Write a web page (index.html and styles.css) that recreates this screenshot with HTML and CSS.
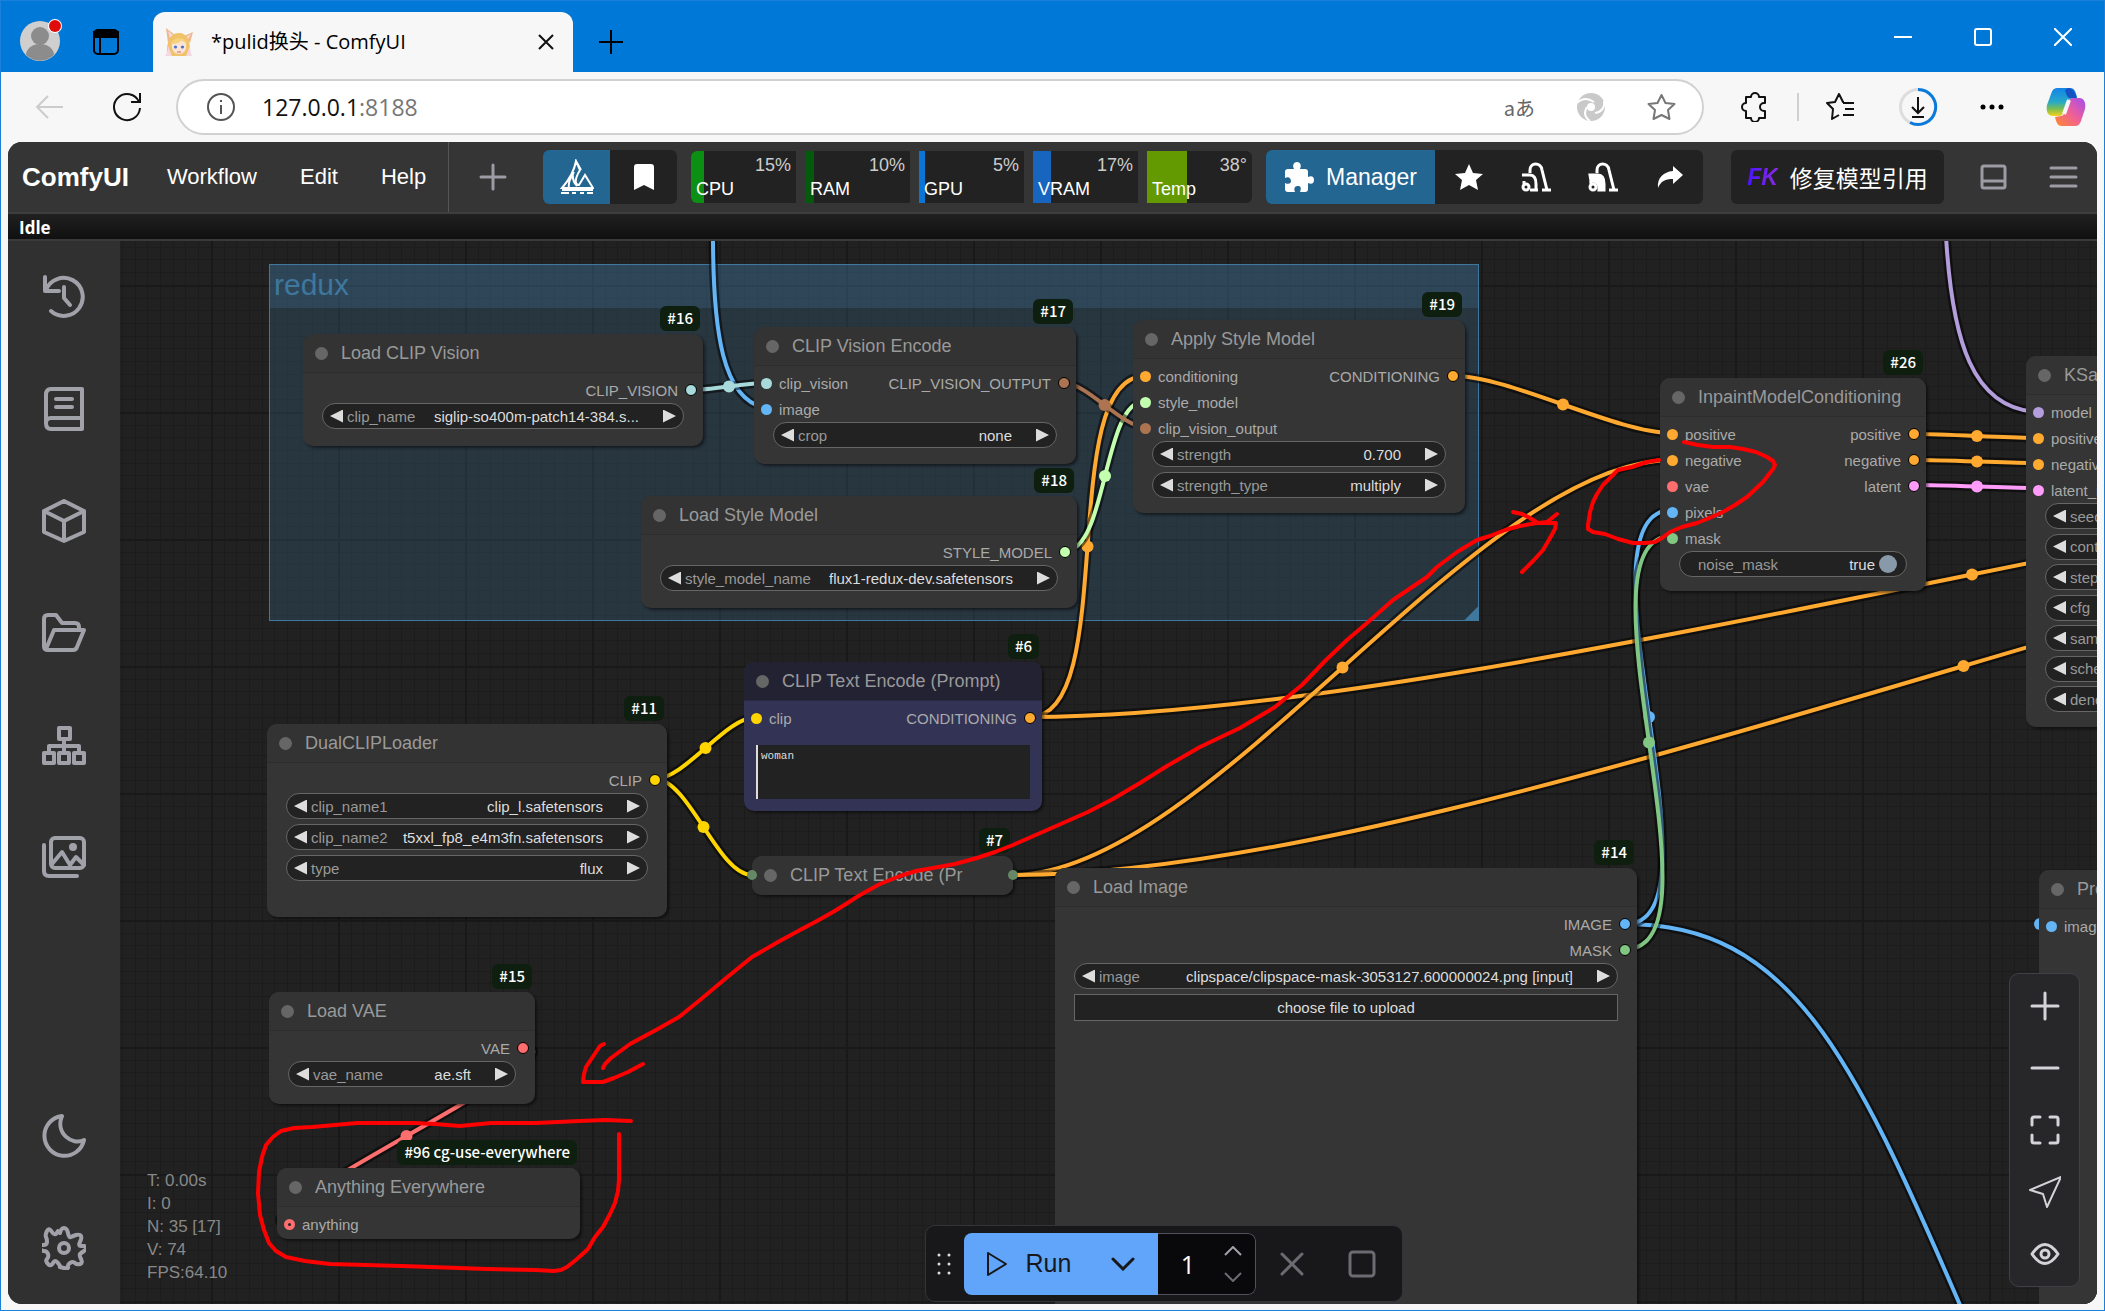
FILE: index.html
```html
<!DOCTYPE html>
<html lang="zh-CN">
<head>
    <meta charset="UTF-8">
    <meta name="viewport" content="width=device-width, initial-scale=1.0">
    <title>*pulid换头 - ComfyUI</title>
    <link rel="stylesheet" href="styles.css">
</head>
<body>
    <!-- Tab strip -->
    <header class="tabstrip">
        <button class="avatar" aria-label="Profile">
            <svg width="46" height="46" viewBox="0 0 46 46"><circle cx="22" cy="25" r="20" fill="#cfcfcf"/><circle cx="22" cy="20" r="9" fill="#8c8c8c"/><path d="M8 39a14 11 0 0 1 28 0 20 20 0 0 1-28 0z" fill="#8c8c8c"/><circle cx="37" cy="10" r="7" fill="#fff"/><circle cx="37" cy="10" r="6" fill="#e00b0b"/></svg>
        </button>
        <button class="workspaces" aria-label="Workspaces">
            <svg width="26" height="26" viewBox="0 0 26 26" fill="none" stroke="#000" stroke-width="2"><rect x="1" y="1" width="24" height="24" rx="4"/><path d="M1 3h24v5H1z" fill="#000"/><path d="M7 8v17"/></svg>
        </button>
        <div class="tab">
            <svg width="28" height="28" viewBox="0 0 28 28"><path d="M3 15 1 0l9 7zM25 15l3-11-9 4z" fill="#f0b88c"/><path d="M5 10 3 3l6 5zM23 11l3-5-5 3z" fill="#f7dce0"/><path d="M2 28C1 12 6 5 14 5s12 8 11 23z" fill="#f0c36a"/><path d="M7 15c2-4 12-4 14 0 1 7-2 11-7 11s-8-4-7-11z" fill="#fbe3d6"/><path d="M6 16c2-7 14-8 16 0-3-1-4-3-5-4-2 3-7 4-11 4z" fill="#f6d27c"/><circle cx="10.500" cy="19" r="1.600" fill="#4a74c9"/><circle cx="17.500" cy="19" r="1.600" fill="#4a74c9"/><path d="M12 24h4" stroke="#c96a6a"/><path d="M3 18c0 4-1 7-3 10h7zM25 18c0 4 1 7 2 10h-6z" fill="#f3d7e2"/></svg>
            <span class="tab-title">*pulid换头 - ComfyUI</span>
            <button aria-label="Close tab"><svg width="16" height="16" viewBox="0 0 16 16" stroke="#111" stroke-width="2"><path d="m1 1 14 14M15 1 1 15"/></svg></button>
        </div>
        <button class="new-tab" aria-label="New tab"><svg width="24" height="24" viewBox="0 0 24 24" stroke="#000" stroke-width="2"><path d="M12 0v24M0 12h24"/></svg></button>
        <div class="window-controls">
            <button aria-label="Minimize"><svg width="18" height="18" viewBox="0 0 18 18" stroke="#fff" stroke-width="2"><path d="M0 9h18"/></svg></button>
            <button aria-label="Maximize"><svg width="18" height="18" viewBox="0 0 18 18" fill="none" stroke="#fff" stroke-width="2"><rect x="1" y="1" width="16" height="16" rx="2"/></svg></button>
            <button aria-label="Close"><svg width="18" height="18" viewBox="0 0 18 18" stroke="#fff" stroke-width="2"><path d="m0 0 18 18M18 0 0 18"/></svg></button>
        </div>
    </header>

    <!-- Address bar -->
    <nav class="toolbar">
        <button class="back" aria-label="Back"><svg width="28" height="24" viewBox="0 0 28 24" fill="none" stroke="#ccc" stroke-width="2"><path d="M28 12H2M13 1 2 12l11 11"/></svg></button>
        <button class="reload" aria-label="Reload"><svg width="30" height="30" viewBox="0 0 30 30" fill="none" stroke="#111" stroke-width="2"><path d="M27 10A13 13 0 1 0 28 16M28 1v9h-9"/></svg></button>
        <div class="address">
            <svg width="28" height="28" viewBox="0 0 28 28" fill="none" stroke="#555" stroke-width="2"><circle cx="14" cy="14" r="13"/><path d="M14 12v9M14 7v2"/></svg>
            <a class="url" href="#">127.0.0.1<span>:8188</span></a>
            <button aria-label="Translate" class="translate">aあ</button>
            <button aria-label="Copilot search"><svg width="28" height="28" viewBox="0 0 28 28"><circle cx="14" cy="14" r="14" fill="#c9c9c9"/><circle cx="14" cy="14" r="4" fill="#fff"/><path d="M0 10c5-5 11-5 17-1M27 8c1 6-2 11-9 12M13 28c-6-4-6-9-3-14" fill="none" stroke="#fff" stroke-width="2"/></svg></button>
            <button aria-label="Add to favorites"><svg width="29" height="28" viewBox="0 0 29 28" fill="none" stroke="#777" stroke-width="2" stroke-linejoin="round"><path d="m14.500 2 4 8 9 1-6.500 6 1.500 9-8-4-8 4L8 17l-6.500-6 9-1z"/></svg></button>
        </div>
        <div class="toolbar-icons">
            <button aria-label="Extensions"><svg width="30" height="30" viewBox="0 0 30 30" fill="none" stroke="#111" stroke-width="2" stroke-linejoin="round"><path d="M6 5h5a4 4 0 0 1 8 0h6v6h-1a4 4 0 0 0 0 8h1v7h-6a4 4 0 0 1-8 0H6v-7a4 4 0 0 1 0-8z"/></svg></button>
            <i class="divider"></i>
            <button aria-label="Favorites"><svg width="30" height="30" viewBox="0 0 30 30" fill="none" stroke="#111" stroke-width="2" stroke-linejoin="round"><path d="M18 10h-1l-4-8-4 8-8 1 6 6-1 10 7-4M17 11h11M19 17h9M17 23h11"/></svg></button>
            <button aria-label="Downloads"><svg width="40" height="40" viewBox="0 0 40 40" fill="none"><circle cx="20" cy="20" r="17.500" stroke="#ddd" stroke-width="3"/><path d="M20 2.500a17.500 17.500 0 1 1-8 33" stroke="#0b7bdb" stroke-width="3"/><path d="M20 10v16m-6-6 6 6 6-6M14 30h12" stroke="#111" stroke-width="2"/></svg></button>
            <button aria-label="Settings and more"><svg width="24" height="6" viewBox="0 0 24 6"><circle cx="3" cy="3" r="2.500"/><circle cx="12" cy="3" r="2.500"/><circle cx="21" cy="3" r="2.500"/></svg></button>
            <button aria-label="Copilot"><svg width="40" height="38" viewBox="0 0 40 38"><defs><linearGradient id="cpBlue" x1="0" y1="0" x2="0" y2="1"><stop offset="0" stop-color="#1483e6"/><stop offset=".5" stop-color="#27a9c9"/><stop offset=".75" stop-color="#7cc04f"/><stop offset="1" stop-color="#f8cf1c"/></linearGradient><linearGradient id="cpPink" x1="1" y1="0" x2="0" y2="1"><stop offset="0" stop-color="#a24cf0"/><stop offset=".5" stop-color="#ef5f98"/><stop offset="1" stop-color="#ff8a2b"/></linearGradient></defs><path d="M11 0h13c5 0 6 5 7 9l-6 2c-2 0-3 1-4 4l-4 10c-1 3-3 3-5 3H7c-6 0-7-6-6-11L5 6c1-4 3-6 6-6z" fill="url(#cpBlue)"/><path d="M22 0c5 0 7 4 9 10h-7c-3 0-4-5-5-8z" fill="#1552c4"/><path d="M29 38H16c-5 0-6-5-7-9l6-1c2 0 3-2 4-4l4-11c1-3 3-3 5-3h5c6 0 7 6 6 11l-4 12c-1 3-3 5-6 5z" fill="url(#cpPink)"/><path d="m23 12-5 14" stroke="#f7f7f7" stroke-width="4"/></svg></button>
        </div>
    </nav>

    <main class="app">
        <!-- Menu bar -->
        <div class="menubar">
            <h1>ComfyUI</h1>
            <button class="menu-item">Workflow</button>
            <button class="menu-item">Edit</button>
            <button class="menu-item">Help</button>
            <div class="workflow-tabs">
                <button aria-label="New workflow"><svg width="28" height="28" viewBox="0 0 28 28" stroke="#9c9ca4" stroke-width="3" stroke-linecap="round"><path d="M14 2v24M2 14h24"/></svg></button>
            </div>
            <div class="group">
                <button class="tool blue" aria-label="Sail"><svg width="34" height="36" viewBox="0 0 34 36" fill="none" stroke="#fff" stroke-width="2"><path d="M16 2C14 14 8 22 2 29h31L25 16l-6 10c-4 0-5-5 1-15z M16 2l5 9M14 13c-4 7-6 11-5 16M13 14c-1 7 1 10 4 13M2 31h31M1 34h8m3 0h4m4 0h4m3 0h6"/></svg></button>
                <button class="tool" aria-label="Bookmark"><svg width="20" height="26" viewBox="0 0 20 26"><path d="M0 3q0-3 3-3h14q3 0 3 3v23l-10-5-10 5z" fill="#fff"/></svg></button>
            </div>
            <div class="monitors">
                <div class="monitor cpu"><i style="width:13px"></i><b>15%</b><span>CPU</span></div>
                <div class="monitor ram"><i style="width:9px"></i><b>10%</b><span>RAM</span></div>
                <div class="monitor gpu"><i style="width:6px"></i><b>5%</b><span>GPU</span></div>
                <div class="monitor vram"><i style="width:18px"></i><b>17%</b><span>VRAM</span></div>
                <div class="monitor temp"><i style="width:40px"></i><b>38°</b><span>Temp</span></div>
            </div>
            <div class="group">
                <button class="manager"><svg width="30" height="30" viewBox="0 0 30 30" fill="#fff"><path d="M1 10q0-3 3-3h6c-2-4 0-7 3-7s5 3 3 7h5q3 0 3 3v5c4-2 6 0 6 3s-2 5-6 3v6q0 3-3 3h-5c2-5 0-6-2-6s-5 1-3 6H4q-3 0-3-3v-6c4 2 6 0 6-2s-2-5-6-3z"/></svg>Manager</button>
                <button class="tool" aria-label="Favorites"><svg width="28" height="26" viewBox="0 0 28 26"><path d="m14 0 4 9 10 1-7 6 2 10-9-5-9 5 2-10-7-6 10-1z" fill="#fff"/></svg></button>
                <button class="tool" aria-label="Unload models"><svg width="30" height="30" viewBox="0 0 30 30" fill="none" stroke="#fff" stroke-width="3"><path d="M9 11V8c0-8 11-8 12 0l5 20M1 13h8c5 0 6 4 6 9v6M3 19v3"/><circle cx="5" cy="25" r="3"/><path d="M9 28h8M21 28h9"/></svg></button>
                <button class="tool" aria-label="Free cache"><svg width="30" height="30" viewBox="0 0 30 30" fill="none" stroke="#fff" stroke-width="3"><path d="M9 11V8c0-8 11-8 12 0l5 20M3 19v3"/><path d="M2 13h8c5 0 6 4 6 9v6h-5c1-7-3-9-8-9z" fill="#fff"/><circle cx="5" cy="25" r="3"/><path d="M21 28h9"/></svg></button>
                <button class="tool" aria-label="Share"><svg width="26" height="22" viewBox="0 0 26 22"><path d="M16 0l10 9-10 9v-5C8 13 4 15 1 22 0 12 6 6 16 5z" fill="#fff"/></svg></button>
            </div>
            <button class="fix-models"><span>FK</span>修复模型引用</button>
            <div class="menu-right">
                <button aria-label="Toggle bottom panel"><svg width="27" height="26" viewBox="0 0 27 26" fill="none" stroke="#9c9ca4" stroke-width="3"><rect x="2" y="2" width="23" height="22" rx="2"/><path d="M2 17h23"/></svg></button>
                <button aria-label="Menu"><svg width="29" height="22" viewBox="0 0 29 22" stroke="#9c9ca4" stroke-width="3" stroke-linecap="round"><path d="M2 2h25M2 11h25M2 20h25"/></svg></button>
            </div>
        </div>
        <div class="status">Idle</div>

        <div class="workspace">
            <aside class="sidebar">
                <button aria-label="Queue"><svg viewBox="0 0 44 44"><path d="M3 2v14h14M4 15a19 19 0 1 1 5 21M22 12v11l6 7"/></svg></button>
                <button aria-label="Node library"><svg viewBox="0 0 44 44"><path d="M9 2h31v40H9q-5 0-5-6V8q0-6 5-6zM40 31H9q-5 0-5 5M14 12h16M14 20h16"/></svg></button>
                <button aria-label="Model library"><svg viewBox="0 0 44 44"><path d="m22 2 20 10v21L22 42 2 33V12zM2 12l20 10 20-10M22 22v20"/></svg></button>
                <button aria-label="Workflows"><svg viewBox="0 0 44 44"><path d="M2 36V8q0-4 4-4h8l6 8h13q4 0 4 4v3M4 38l8-19h30l-7 17q-1 3-4 3H6q-4 0-4-4"/></svg></button>
                <button aria-label="Nodes map"><svg viewBox="0 0 44 44"><path d="M17 5h11v11H17zM2 30h10v10H2zM17 30h10v10H17zM32 30h10v10H32zM22 16v14M7 30v-7h30v7"/></svg></button>
                <button aria-label="Gallery"><svg viewBox="0 0 44 44"><rect x="9" y="3" width="33" height="30" rx="4"/><path d="M2 10v26q0 5 5 5h28M10 29l10-12 8 13 6-8 8 8"/><circle cx="31" cy="12" r="2"/></svg></button>
                <button class="push" aria-label="Theme"><svg viewBox="0 0 44 44"><path d="M20 2A20 20 0 1 0 42 26C30 32 13 19 20 2z"/></svg></button>
                <button aria-label="Settings"><svg viewBox="0 0 44 44"><path d="M18 7q1-5 4-5t4 5 3 4 5-2q4-1 5 1t-1 6 1 4 3 0q3 1 3 2t-3 3-4 3 1 5-1 5-5-1-5 0-2 4-4 1-4-1-2-4-5 0-5 1-1-5 1-5-4-3-4-3 3-3 4-3-1-5 1-6 5 1 6-1z"/><circle cx="22" cy="22" r="5"/></svg></button>
            </aside>

            <section class="canvas">
                <div class="graph">
                    <svg class="layer" width="2105" height="1311">
                        <defs>
                            <pattern id="grid" x="211" y="285" width="127" height="127" patternUnits="userSpaceOnUse">
                                <path d="M13.500 0v127M25.500 0v127M38.500 0v127M51.500 0v127M63.500 0v127M76.500 0v127M89.500 0v127M101.500 0v127M114.500 0v127M0 13.500h127M0 25.500h127M0 38.500h127M0 51.500h127M0 63.500h127M0 76.500h127M0 89.500h127M0 101.500h127M0 114.500h127" stroke="#1c1c1c"/>
                                <path d="M0 1h127M1 0v127" stroke="#191919" stroke-width="2"/>
                            </pattern>
                        </defs>
                        <rect width="2105" height="1311" fill="url(#grid)"/>
                    </svg>

                    <section class="node-group"><h2>redux</h2></section>

                    <svg class="layer" id="links" width="2105" height="1311"></svg>

                    <article class="node n16">
                        <span class="badge">#16</span>
                        <h3>Load CLIP Vision</h3>
                        <div class="row"><span class="out clipvision">CLIP_VISION</span></div>
                        <div class="widgets">
                            <div class="widget"><button class="prev" aria-label="Previous"></button><label for="w1">clip_name</label><select id="w1"><option>siglip-so400m-patch14-384.s...</option></select><button class="next" aria-label="Next"></button></div>
                        </div>
                    </article>

                    <article class="node n17">
                        <span class="badge">#17</span>
                        <h3>CLIP Vision Encode</h3>
                        <div class="row"><span class="in clipvision">clip_vision</span><span class="out visionout">CLIP_VISION_OUTPUT</span></div>
                        <div class="row"><span class="in image">image</span></div>
                        <div class="widgets">
                            <div class="widget"><button class="prev" aria-label="Previous"></button><label for="w2">crop</label><select id="w2"><option>none</option></select><button class="next" aria-label="Next"></button></div>
                        </div>
                    </article>

                    <article class="node n18">
                        <span class="badge">#18</span>
                        <h3>Load Style Model</h3>
                        <div class="row"><span class="out style">STYLE_MODEL</span></div>
                        <div class="widgets">
                            <div class="widget"><button class="prev" aria-label="Previous"></button><label for="w3">style_model_name</label><select id="w3"><option>flux1-redux-dev.safetensors</option></select><button class="next" aria-label="Next"></button></div>
                        </div>
                    </article>

                    <article class="node n19">
                        <span class="badge">#19</span>
                        <h3>Apply Style Model</h3>
                        <div class="row"><span class="in cond">conditioning</span><span class="out cond">CONDITIONING</span></div>
                        <div class="row"><span class="in style">style_model</span></div>
                        <div class="row"><span class="in visionout">clip_vision_output</span></div>
                        <div class="widgets">
                            <div class="widget"><button class="prev" aria-label="Decrease"></button><label for="w4">strength</label><input id="w4" type="text" value="0.700"><button class="next" aria-label="Increase"></button></div>
                            <div class="widget"><button class="prev" aria-label="Previous"></button><label for="w5">strength_type</label><select id="w5"><option>multiply</option></select><button class="next" aria-label="Next"></button></div>
                        </div>
                    </article>

                    <article class="node n26">
                        <span class="badge">#26</span>
                        <h3>InpaintModelConditioning</h3>
                        <div class="row"><span class="in cond">positive</span><span class="out cond">positive</span></div>
                        <div class="row"><span class="in cond">negative</span><span class="out cond">negative</span></div>
                        <div class="row"><span class="in vae">vae</span><span class="out latent">latent</span></div>
                        <div class="row"><span class="in image">pixels</span></div>
                        <div class="row"><span class="in mask">mask</span></div>
                        <div class="widgets">
                            <div class="widget toggle"><label for="w6">noise_mask</label><output for="w6">true</output><input id="w6" type="checkbox" checked></div>
                        </div>
                    </article>

                    <article class="node ksampler">
                        <h3>KSampler</h3>
                        <div class="row"><span class="in model">model</span></div>
                        <div class="row"><span class="in cond">positive</span></div>
                        <div class="row"><span class="in cond">negative</span></div>
                        <div class="row"><span class="in latent">latent_image</span></div>
                        <div class="widgets">
                            <div class="widget"><button class="prev" aria-label="Decrease"></button><label for="k1">seed</label><input id="k1" type="text"></div>
                            <div class="widget"><button class="prev" aria-label="Previous"></button><label for="k2">control_after_generate</label><select id="k2"></select></div>
                            <div class="widget"><button class="prev" aria-label="Decrease"></button><label for="k3">steps</label><input id="k3" type="text"></div>
                            <div class="widget"><button class="prev" aria-label="Decrease"></button><label for="k4">cfg</label><input id="k4" type="text"></div>
                            <div class="widget"><button class="prev" aria-label="Previous"></button><label for="k5">sampler_name</label><select id="k5"></select></div>
                            <div class="widget"><button class="prev" aria-label="Previous"></button><label for="k6">scheduler</label><select id="k6"></select></div>
                            <div class="widget"><button class="prev" aria-label="Decrease"></button><label for="k7">denoise</label><input id="k7" type="text"></div>
                        </div>
                    </article>

                    <article class="node prompt n6">
                        <span class="badge">#6</span>
                        <h3>CLIP Text Encode (Prompt)</h3>
                        <div class="row"><span class="in clip">clip</span><span class="out cond">CONDITIONING</span></div>
                        <textarea aria-label="Prompt">woman</textarea>
                    </article>

                    <article class="node n11">
                        <span class="badge">#11</span>
                        <h3>DualCLIPLoader</h3>
                        <div class="row"><span class="out clip">CLIP</span></div>
                        <div class="widgets">
                            <div class="widget"><button class="prev" aria-label="Previous"></button><label for="w7">clip_name1</label><select id="w7"><option>clip_l.safetensors</option></select><button class="next" aria-label="Next"></button></div>
                            <div class="widget"><button class="prev" aria-label="Previous"></button><label for="w8">clip_name2</label><select id="w8"><option>t5xxl_fp8_e4m3fn.safetensors</option></select><button class="next" aria-label="Next"></button></div>
                            <div class="widget"><button class="prev" aria-label="Previous"></button><label for="w9">type</label><select id="w9"><option>flux</option></select><button class="next" aria-label="Next"></button></div>
                        </div>
                    </article>

                    <article class="node collapsed n7">
                        <span class="badge">#7</span>
                        <h3>CLIP Text Encode (Pr</h3>
                    </article>

                    <article class="node n15">
                        <span class="badge">#15</span>
                        <h3>Load VAE</h3>
                        <div class="row"><span class="out vae">VAE</span></div>
                        <div class="widgets">
                            <div class="widget"><button class="prev" aria-label="Previous"></button><label for="w10">vae_name</label><select id="w10"><option>ae.sft</option></select><button class="next" aria-label="Next"></button></div>
                        </div>
                    </article>

                    <article class="node n96">
                        <span class="badge">#96 cg-use-everywhere</span>
                        <h3>Anything Everywhere</h3>
                        <div class="row"><span class="in vae ring">anything</span></div>
                    </article>

                    <article class="node n14">
                        <span class="badge">#14</span>
                        <h3>Load Image</h3>
                        <div class="row"><span class="out image">IMAGE</span></div>
                        <div class="row"><span class="out mask">MASK</span></div>
                        <div class="widgets">
                            <div class="widget"><button class="prev" aria-label="Previous"></button><label for="w11">image</label><select id="w11"><option>clipspace/clipspace-mask-3053127.600000024.png [input]</option></select><button class="next" aria-label="Next"></button></div>
                            <button class="upload">choose file to upload</button>
                        </div>
                    </article>

                    <article class="node preview">
                        <h3>Preview Image</h3>
                        <div class="row"><span class="in image">images</span></div>
                    </article>

                    <!-- Hand-drawn notes -->
                    <svg class="layer notes" width="2105" height="1311">
                        <polyline points="603,1068 605,1064 611,1058 630,1044 656,1030 679,1017 700,1000 725,979 752,957 778,942 800,930 817,921 833,912 846,904 860,895 880,884 900,876 916,871 933,868 955,864 977,858 995,852 1013,845 1038,834 1063,823 1088,812 1113,799 1140,783 1167,766 1200,747 1240,728 1275,707 1302,685 1325,661 1347,640 1367,623 1393,600 1427,577 1437,567 1457,552 1477,540 1490,536 1505,530 1520,526 1537,523 1556,523 1555,529 1550,538 1543,550 1534,560 1522,572"/>
                        <polyline points="1513,512 1522,514 1530,518 1538,523 1547,522 1557,514"/>
                        <polyline points="604,1044 600,1046 592,1058 586,1067 584,1074 583,1082 603,1082 614,1078 628,1072 643,1064"/>
                        <polyline points="631,1121 605,1120 580,1121 536,1123 491,1123 460,1126 435,1124 415,1123 357,1123 335,1125 312,1127 294,1128 281,1131 273,1137 266,1145 262,1157 259,1172 258,1193 260,1215 264,1230 269,1243 276,1251 286,1257 305,1261 330,1264 402,1266 487,1269 535,1270 554,1271 561,1270 567,1267 577,1259 588,1249 595,1237 603,1227 610,1214 615,1203 618,1191 619,1180 619,1134"/>
                        <polyline points="1684,442 1698,445 1713,447 1730,447 1743,449 1756,452 1767,457 1773,461 1775,465 1773,469 1763,482 1747,497 1735,505 1723,512 1707,519 1697,523 1682,527 1670,532 1662,538 1655,542 1645,543 1633,543 1618,539 1605,534 1593,532 1588,529 1588,525 1590,512 1593,502 1597,494 1603,485 1618,470 1632,467 1647,462 1659,460"/>
                    </svg>
                </div>

                <div class="stats">
                    <div>T: 0.00s</div>
                    <div>I: 0</div>
                    <div>N: 35 [17]</div>
                    <div>V: 74</div>
                    <div>FPS:64.10</div>
                </div>

                <div class="runbar">
                    <svg width="14" height="24" viewBox="0 0 14 24" fill="#ddd"><circle cx="2" cy="3" r="1.500"/><circle cx="12" cy="3" r="1.500"/><circle cx="2" cy="12" r="1.500"/><circle cx="12" cy="12" r="1.500"/><circle cx="2" cy="21" r="1.500"/><circle cx="12" cy="21" r="1.500"/></svg>
                    <div class="run-group">
                        <button class="run"><svg width="20" height="24" viewBox="0 0 20 24" fill="none" stroke="#18181b" stroke-width="2" stroke-linejoin="round"><path d="M1 1v22l18-11z"/></svg>Run</button>
                        <button class="run-more" aria-label="Run options"><svg width="24" height="14" viewBox="0 0 24 14" fill="none" stroke="#18181b" stroke-width="3" stroke-linecap="round"><path d="m2 2 10 10L22 2"/></svg></button>
                        <div class="count">
                            <input type="text" value="1" aria-label="Batch count">
                            <div class="steps">
                                <button aria-label="More"><svg width="18" height="10" viewBox="0 0 18 10" fill="none" stroke="#a1a1aa" stroke-width="2"><path d="m1 9 8-8 8 8"/></svg></button>
                                <button aria-label="Less"><svg width="18" height="10" viewBox="0 0 18 10" fill="none" stroke="#6b6b72" stroke-width="2"><path d="m1 1 8 8 8-8"/></svg></button>
                            </div>
                        </div>
                    </div>
                    <button class="run-icon" aria-label="Cancel"><svg width="24" height="24" viewBox="0 0 24 24" stroke="#6b6b72" stroke-width="3" stroke-linecap="round"><path d="m2 2 20 20M22 2 2 22"/></svg></button>
                    <button class="run-icon" aria-label="Clear queue"><svg width="28" height="28" viewBox="0 0 28 28" fill="none" stroke="#6b6b72" stroke-width="3"><rect x="2" y="2" width="24" height="24" rx="3"/></svg></button>
                </div>

                <div class="zoombar">
                    <button aria-label="Zoom in"><svg viewBox="0 0 32 32"><path d="M16 3v26M3 16h26"/></svg></button>
                    <button aria-label="Zoom out"><svg viewBox="0 0 32 32"><path d="M3 16h26"/></svg></button>
                    <button aria-label="Fit view"><svg viewBox="0 0 32 32"><path d="M3 11V5q0-2 2-2h6M21 3h6q2 0 2 2v6M29 21v6q0 2-2 2h-6M11 29H5q-2 0-2-2v-6"/></svg></button>
                    <button aria-label="Select mode"><svg viewBox="0 0 32 32"><path class="thin" d="M32 1 1 14l13 4 4 13z"/></svg></button>
                    <button aria-label="Toggle links"><svg viewBox="0 0 32 32"><path d="M3 16q13-19 26 0-13 19-26 0z"/><circle cx="16" cy="16" r="4"/></svg></button>
                </div>
            </section>
        </div>
    </main>

    <script src="links.js"></script>
</body>
</html>
```
FILE: links.js
```js
const colors = {
    clipvision: "#a8dadc",
    image: "#64b5f6",
    visionout: "#ad7452",
    style: "#c2ffae",
    cond: "#ffa931",
    latent: "#ff9cf9",
    model: "#b39ddb",
    mask: "#81c784",
    clip: "#ffd500",
    vae: "#ff6e6e"
};

// type, x1, y1, x2, y2
const links = [
    ["clipvision", 691, 390, 767, 383],
    ["cond", 1030, 717, 1145, 376],
    ["style", 1065, 551, 1145, 401],
    ["visionout", 1064, 383, 1145, 427],
    ["cond", 1454, 376, 1672, 433],
    ["cond", 1915, 434, 2039, 438],
    ["cond", 1915, 460, 2039, 463],
    ["latent", 1915, 485, 2039, 488],
    ["cond", 1030, 717, 2914, 432],
    ["cond", 1013, 875, 1672, 460],
    ["cond", 1013, 875, 2914, 457],
    ["image", 1626, 924, 1672, 510],
    ["mask", 1626, 949, 1672, 536],
    ["clip", 655, 779, 756, 717],
    ["clip", 655, 779, 752, 875],
    ["vae", 524, 1048, 289, 1224]
];

const svg = document.getElementById("links");

function add(tag, attrs) {
    const el = document.createElementNS("http://www.w3.org/2000/svg", tag);
    for (const key in attrs) el.setAttribute(key, attrs[key]);
    svg.appendChild(el);
}

function drawPath(d, color) {
    add("path", { d, stroke: "rgba(0,0,0,0.5)", "stroke-width": 9, fill: "none" });
    add("path", { d, stroke: color, "stroke-width": 4, fill: "none" });
}

// links that leave the visible area
drawPath("M713 236C713 330 722 402 767 408", colors.image);
drawPath("M1946 236C1952 340 1972 410 2039 412", colors.model);
drawPath("M1626 924C1790 924 1852 1055 1960 1305", colors.image);
add("circle", { cx: 2040, cy: 924, r: 6, fill: colors.image });

links.forEach(([type, x1, y1, x2, y2]) => {
    const off = Math.hypot(x2 - x1, y2 - y1) * 0.25;
    drawPath(`M${x1} ${y1}C${x1 + off} ${y1} ${x2 - off} ${y2} ${x2} ${y2}`, colors[type]);
    add("circle", { cx: (x1 + x2) / 2, cy: (y1 + y2) / 2, r: 6, fill: colors[type] });
});
```
FILE: styles.css
```css
*, *::before, *::after {
    box-sizing: border-box;
}

body {
    margin: 0;
    height: 100vh;
    display: flex;
    flex-direction: column;
    border: 1px solid #1a80d9;
    background: #f7f7f7;
    font-family: "Liberation Sans", "Noto Sans CJK SC", sans-serif;
    overflow: hidden;
}

h1, h2, h3 {
    margin: 0;
    font-weight: normal;
}

button {
    display: flex;
    align-items: center;
    justify-content: center;
    padding: 0;
    border: 0;
    background: none;
    color: inherit;
    font: inherit;
}

svg {
    display: block;
    flex: none;
}

/* Browser window */
.tabstrip {
    display: flex;
    align-items: center;
    flex: none;
    height: 71px;
    padding: 11px 0 0 17px;
    background: #0078d7;
}

.avatar {
    margin-bottom: 7px;
}

.workspaces {
    margin: 0 34px 0 29px;
}

.tab {
    display: flex;
    align-items: center;
    gap: 18px;
    align-self: stretch;
    width: 420px;
    padding: 0 19px 0 12px;
    border-radius: 12px 12px 0 0;
    background: #f7f7f7;
}

.tab-title {
    flex: 1;
    padding-bottom: 3px;
    font: 20px "Open Sans", "Noto Sans CJK SC", sans-serif;
}

.new-tab {
    margin-left: 26px;
}

.window-controls {
    display: flex;
    gap: 62px;
    margin-left: auto;
    padding: 0 32px 10px 0;
}

.toolbar {
    display: flex;
    align-items: center;
    flex: none;
    height: 70px;
    padding: 0 18px 0 34px;
}

.reload {
    margin: 0 34px 0 49px;
}

.address {
    display: flex;
    align-items: center;
    flex: 1;
    height: 56px;
    padding: 0 26px 0 29px;
    border: 2px solid #d1d1d1;
    border-radius: 28px;
    background: #fff;
    gap: 42px;
}

.url {
    flex: 1;
    margin-left: -15px;
    color: #111;
    text-decoration: none;
    font: 23px "Open Sans", sans-serif;
}

.url span {
    color: #767676;
}

.translate {
    color: #666;
    font: 20px "Noto Sans CJK JP", sans-serif;
}

.toolbar-icons {
    display: flex;
    align-items: center;
    gap: 42px;
    margin-left: 36px;
}

.divider {
    width: 2px;
    height: 28px;
    margin: 0 -15px;
    background: #d0d0d0;
}

/* App shell */
.app {
    display: flex;
    flex-direction: column;
    flex: 1;
    min-height: 0;
    margin: 0 7px 6px 7px;
    border-radius: 14px;
    background: #202020;
    color: #fff;
    overflow: hidden;
}

.menubar {
    display: flex;
    align-items: center;
    flex: none;
    height: 72px;
    padding-left: 14px;
    border-bottom: 2px solid #3e3e3e;
    background: #353535;
    font-size: 22px;
}

h1 {
    margin-right: 38px;
    font-size: 26px;
    font-weight: bold;
}

.menu-item {
    margin-right: 43px;
}

.workflow-tabs {
    display: flex;
    align-items: center;
    align-self: stretch;
    flex: 1;
    margin-left: -21px;
    padding-left: 30px;
    border-left: 1px solid #555;
}

.group {
    display: flex;
    height: 54px;
    border-radius: 6px;
    background: #222;
    overflow: hidden;
}

.tool {
    width: 67px;
}

.blue, .manager {
    background: #236692;
}

.manager {
    gap: 12px;
    width: 169px;
    font-size: 23px;
}

.monitors {
    display: flex;
    gap: 9px;
    margin: 0 14px;
}

.monitor {
    display: flex;
    flex-direction: column;
    justify-content: space-between;
    position: relative;
    width: 105px;
    height: 52px;
    padding: 3px 5px;
    background: #222;
    font-size: 18px;
    line-height: 22px;
}

.monitor:first-child, .cpu i {
    border-radius: 6px 0 0 6px;
}

.monitor:last-child {
    border-radius: 0 6px 6px 0;
}

.monitor i {
    position: absolute;
    left: 0;
    top: 0;
    height: 100%;
}

.monitor b {
    align-self: flex-end;
    color: #ccc;
    font-weight: normal;
}

.monitor span {
    position: relative;
}

.cpu i { background: #0c9013; }
.ram i { background: #045a0c; }
.gpu i { background: #0c74d4; }
.vram i { background: #1765bf; }
.temp i { background: #639a02; }

.fix-models {
    gap: 12px;
    width: 213px;
    height: 54px;
    margin-left: 28px;
    border-radius: 6px;
    background: #222;
    font-size: 23px;
}

.fix-models span {
    background: linear-gradient(90deg, #4a14ff, #8a2be2);
    background-clip: text;
    color: transparent;
    font-weight: bold;
    font-style: italic;
}

.menu-right {
    display: flex;
    align-items: center;
    gap: 42px;
    padding: 0 19px 0 36px;
}

.status {
    flex: none;
    height: 27px;
    padding-left: 11px;
    border-bottom: 2px solid #3a3a3a;
    background: linear-gradient(#202020, #101010);
    font: bold 17px/27px "Open Sans", sans-serif;
}

.workspace {
    display: flex;
    flex: 1;
    min-height: 0;
}

.sidebar {
    display: flex;
    flex-direction: column;
    width: 112px;
    background: #303030;
}

.sidebar button {
    height: 112px;
}

.sidebar svg {
    width: 44px;
    height: 44px;
    fill: none;
    stroke: #a1a1aa;
    stroke-width: 4;
    stroke-linecap: round;
    stroke-linejoin: round;
}

.sidebar .push {
    margin-top: auto;
}

/* Node canvas */
.canvas {
    position: relative;
    flex: 1;
    background: #212121;
    overflow: hidden;
}

/* current pan offset of the graph */
.graph {
    position: absolute;
    left: -120px;
    top: -241px;
}

.layer {
    position: absolute;
    left: 0;
    top: 0;
}

.notes {
    fill: none;
    stroke: #f00;
    stroke-width: 4;
    stroke-linecap: round;
    stroke-linejoin: round;
    pointer-events: none;
}

.node-group {
    position: absolute;
    left: 269px;
    top: 264px;
    width: 1210px;
    height: 357px;
    border: 1px solid #3f789e;
    background: linear-gradient(315deg, #3f789e 9px, transparent 10px), rgba(63, 120, 158, 0.25);
}

.node-group h2 {
    height: 43px;
    padding-left: 4px;
    background: rgba(63, 120, 158, 0.25);
    color: #3f789e;
    font-size: 30px;
    line-height: 40px;
}

.node {
    position: absolute;
    border-radius: 10px;
    background: #353535;
    box-shadow: 2px 2px 3px rgba(0, 0, 0, 0.5);
    color: #aaa;
    font-size: 15px;
}

.n16 { left: 303px; top: 334px; width: 400px; height: 112px; }
.n17 { left: 754px; top: 327px; width: 322px; height: 137px; }
.n18 { left: 641px; top: 496px; width: 436px; height: 112px; }
.n19 { left: 1133px; top: 320px; width: 332px; height: 193px; }
.n26 { left: 1660px; top: 378px; width: 266px; height: 213px; }
.n6 { left: 744px; top: 662px; width: 298px; height: 149px; }
.n7 { left: 752px; top: 856px; width: 261px; height: 39px; }
.n11 { left: 267px; top: 724px; width: 400px; height: 193px; }
.n15 { left: 269px; top: 992px; width: 266px; height: 112px; }
.n96 { left: 277px; top: 1168px; width: 303px; height: 71px; }
.n14 { left: 1055px; top: 868px; width: 582px; height: 500px; }
.ksampler { left: 2026px; top: 356px; width: 400px; height: 371px; }
.preview { left: 2039px; top: 870px; width: 400px; height: 500px; }

.node h3 {
    display: flex;
    align-items: center;
    gap: 13px;
    height: 39px;
    margin-bottom: 4px;
    padding-left: 12px;
    border-bottom: 1px solid #2d2d2d;
    border-radius: 10px 10px 0 0;
    background: #333;
    color: #999;
    font-size: 18px;
}

.node h3::before {
    content: "";
    width: 13px;
    height: 13px;
    border-radius: 50%;
    background: #666;
}

.badge {
    position: absolute;
    right: 3px;
    top: -28px;
    height: 25px;
    padding: 0 7px;
    border-radius: 6px;
    background: #0f1f0f;
    color: #fff;
    font: 500 15px/24px "Noto Sans CJK SC", sans-serif;
    white-space: nowrap;
}

.row {
    display: flex;
    height: 26px;
    padding: 0 6px 0 7px;
}

.in, .out {
    display: flex;
    align-items: center;
    gap: 7px;
}

.out {
    flex-direction: row-reverse;
    margin-left: auto;
}

.in::before, .out::before {
    content: "";
    width: 11px;
    height: 11px;
    border-radius: 50%;
    background: var(--slot);
}

.out::before {
    width: 12px;
    height: 12px;
    border: 1px solid #000;
}

.ring::before {
    border: 4px solid var(--slot);
    background: #222;
}

.clipvision { --slot: #a8dadc; }
.visionout { --slot: #ad7452; }
.image { --slot: #64b5f6; }
.style { --slot: #c2ffae; }
.cond { --slot: #ffa931; }
.latent { --slot: #ff9cf9; }
.model { --slot: #b39ddb; }
.mask { --slot: #81c784; }
.clip { --slot: #ffd500; }
.vae { --slot: #ff6e6e; }

.widgets {
    display: flex;
    flex-direction: column;
    gap: 5px;
    margin: 0 19px;
}

.ksampler .widgets {
    justify-content: space-between;
    gap: 0;
    height: 209px;
}

.widget {
    display: flex;
    align-items: center;
    height: 26px;
    padding: 0 7px;
    border: 1px solid #666;
    border-radius: 13px;
    background: #222;
    color: #999;
}

.widget label {
    margin-left: 4px;
}

.widget select, .widget input[type="text"] {
    flex: 1;
    min-width: 0;
    padding: 0;
    margin-right: 24px;
    border: 0;
    background: none;
    appearance: none;
    color: #ddd;
    font: inherit;
    text-align: right;
    text-align-last: right;
}

.prev, .next {
    width: 13px;
    height: 13px;
    background: #ddd;
    clip-path: polygon(0 50%, 100% 0, 100% 100%);
}

.next {
    clip-path: polygon(0 0, 100% 50%, 0 100%);
}

.toggle {
    padding: 0 9px 0 14px;
}

.toggle output {
    margin-left: auto;
    color: #ddd;
}

.toggle input {
    width: 18px;
    height: 18px;
    margin: 0 0 0 4px;
    border-radius: 50%;
    background: #8899aa;
    appearance: none;
}

.upload {
    height: 27px;
    border: 1px solid #666;
    background: #222;
    color: #ddd;
}

.prompt {
    background: #335;
}

.prompt h3 {
    border-color: #2a2a44;
    background: #223;
}

.prompt textarea {
    display: block;
    width: 274px;
    height: 54px;
    margin: 14px 12px 0;
    padding: 5px 3px;
    border: 0;
    border-left: 2px solid #ddd;
    background: #222;
    color: #ddd;
    font: 11px "Liberation Mono", monospace;
    resize: none;
}

.collapsed h3 {
    margin: 0;
    border: 0;
    border-radius: 10px;
}

.collapsed::before, .collapsed::after {
    content: "";
    position: absolute;
    left: -5px;
    top: 14px;
    width: 10px;
    height: 10px;
    border-radius: 50%;
    background: #686;
}

.collapsed::after {
    left: auto;
    right: -5px;
}

/* Overlays */
.stats {
    position: absolute;
    left: 27px;
    bottom: 20px;
    color: #888;
    font-size: 17px;
    line-height: 23px;
}

.runbar {
    position: absolute;
    left: 805px;
    bottom: 2px;
    display: flex;
    align-items: center;
    height: 77px;
    padding: 0 26px 0 11px;
    border: 1px solid #333338;
    border-radius: 10px;
    background: #18181b;
}

.run-group {
    display: flex;
    height: 62px;
    margin: 0 24px 0 13px;
    border-radius: 8px;
    color: #18181b;
    overflow: hidden;
}

.run {
    gap: 19px;
    width: 124px;
    padding-left: 6px;
    background: #60a5fa;
    font-size: 25px;
}

.run-more {
    width: 70px;
    background: #60a5fa;
}

.count {
    display: flex;
    width: 98px;
    border: 1px solid #52525b;
    border-left: 0;
    border-radius: 0 8px 8px 0;
    background: #09090b;
}

.count input {
    width: 60px;
    padding: 0;
    border: 0;
    background: none;
    color: #fff;
    font: 25px "Open Sans", sans-serif;
    text-align: center;
}

.steps {
    display: flex;
    flex-direction: column;
    justify-content: space-around;
    padding: 4px 0 4px 6px;
}

.run-icon + .run-icon {
    margin-left: 44px;
}

.zoombar {
    position: absolute;
    right: 17px;
    bottom: 17px;
    display: flex;
    flex-direction: column;
    width: 71px;
    padding: 1px 0;
    border: 1px solid #3f3f46;
    border-radius: 10px;
    background: #27272a;
}

.zoombar button {
    height: 62px;
}

.zoombar svg {
    width: 32px;
    height: 32px;
    fill: none;
    stroke: #d4d4d8;
    stroke-width: 3;
    stroke-linecap: round;
    stroke-linejoin: round;
}

.zoombar .thin {
    stroke-width: 2;
}
```
